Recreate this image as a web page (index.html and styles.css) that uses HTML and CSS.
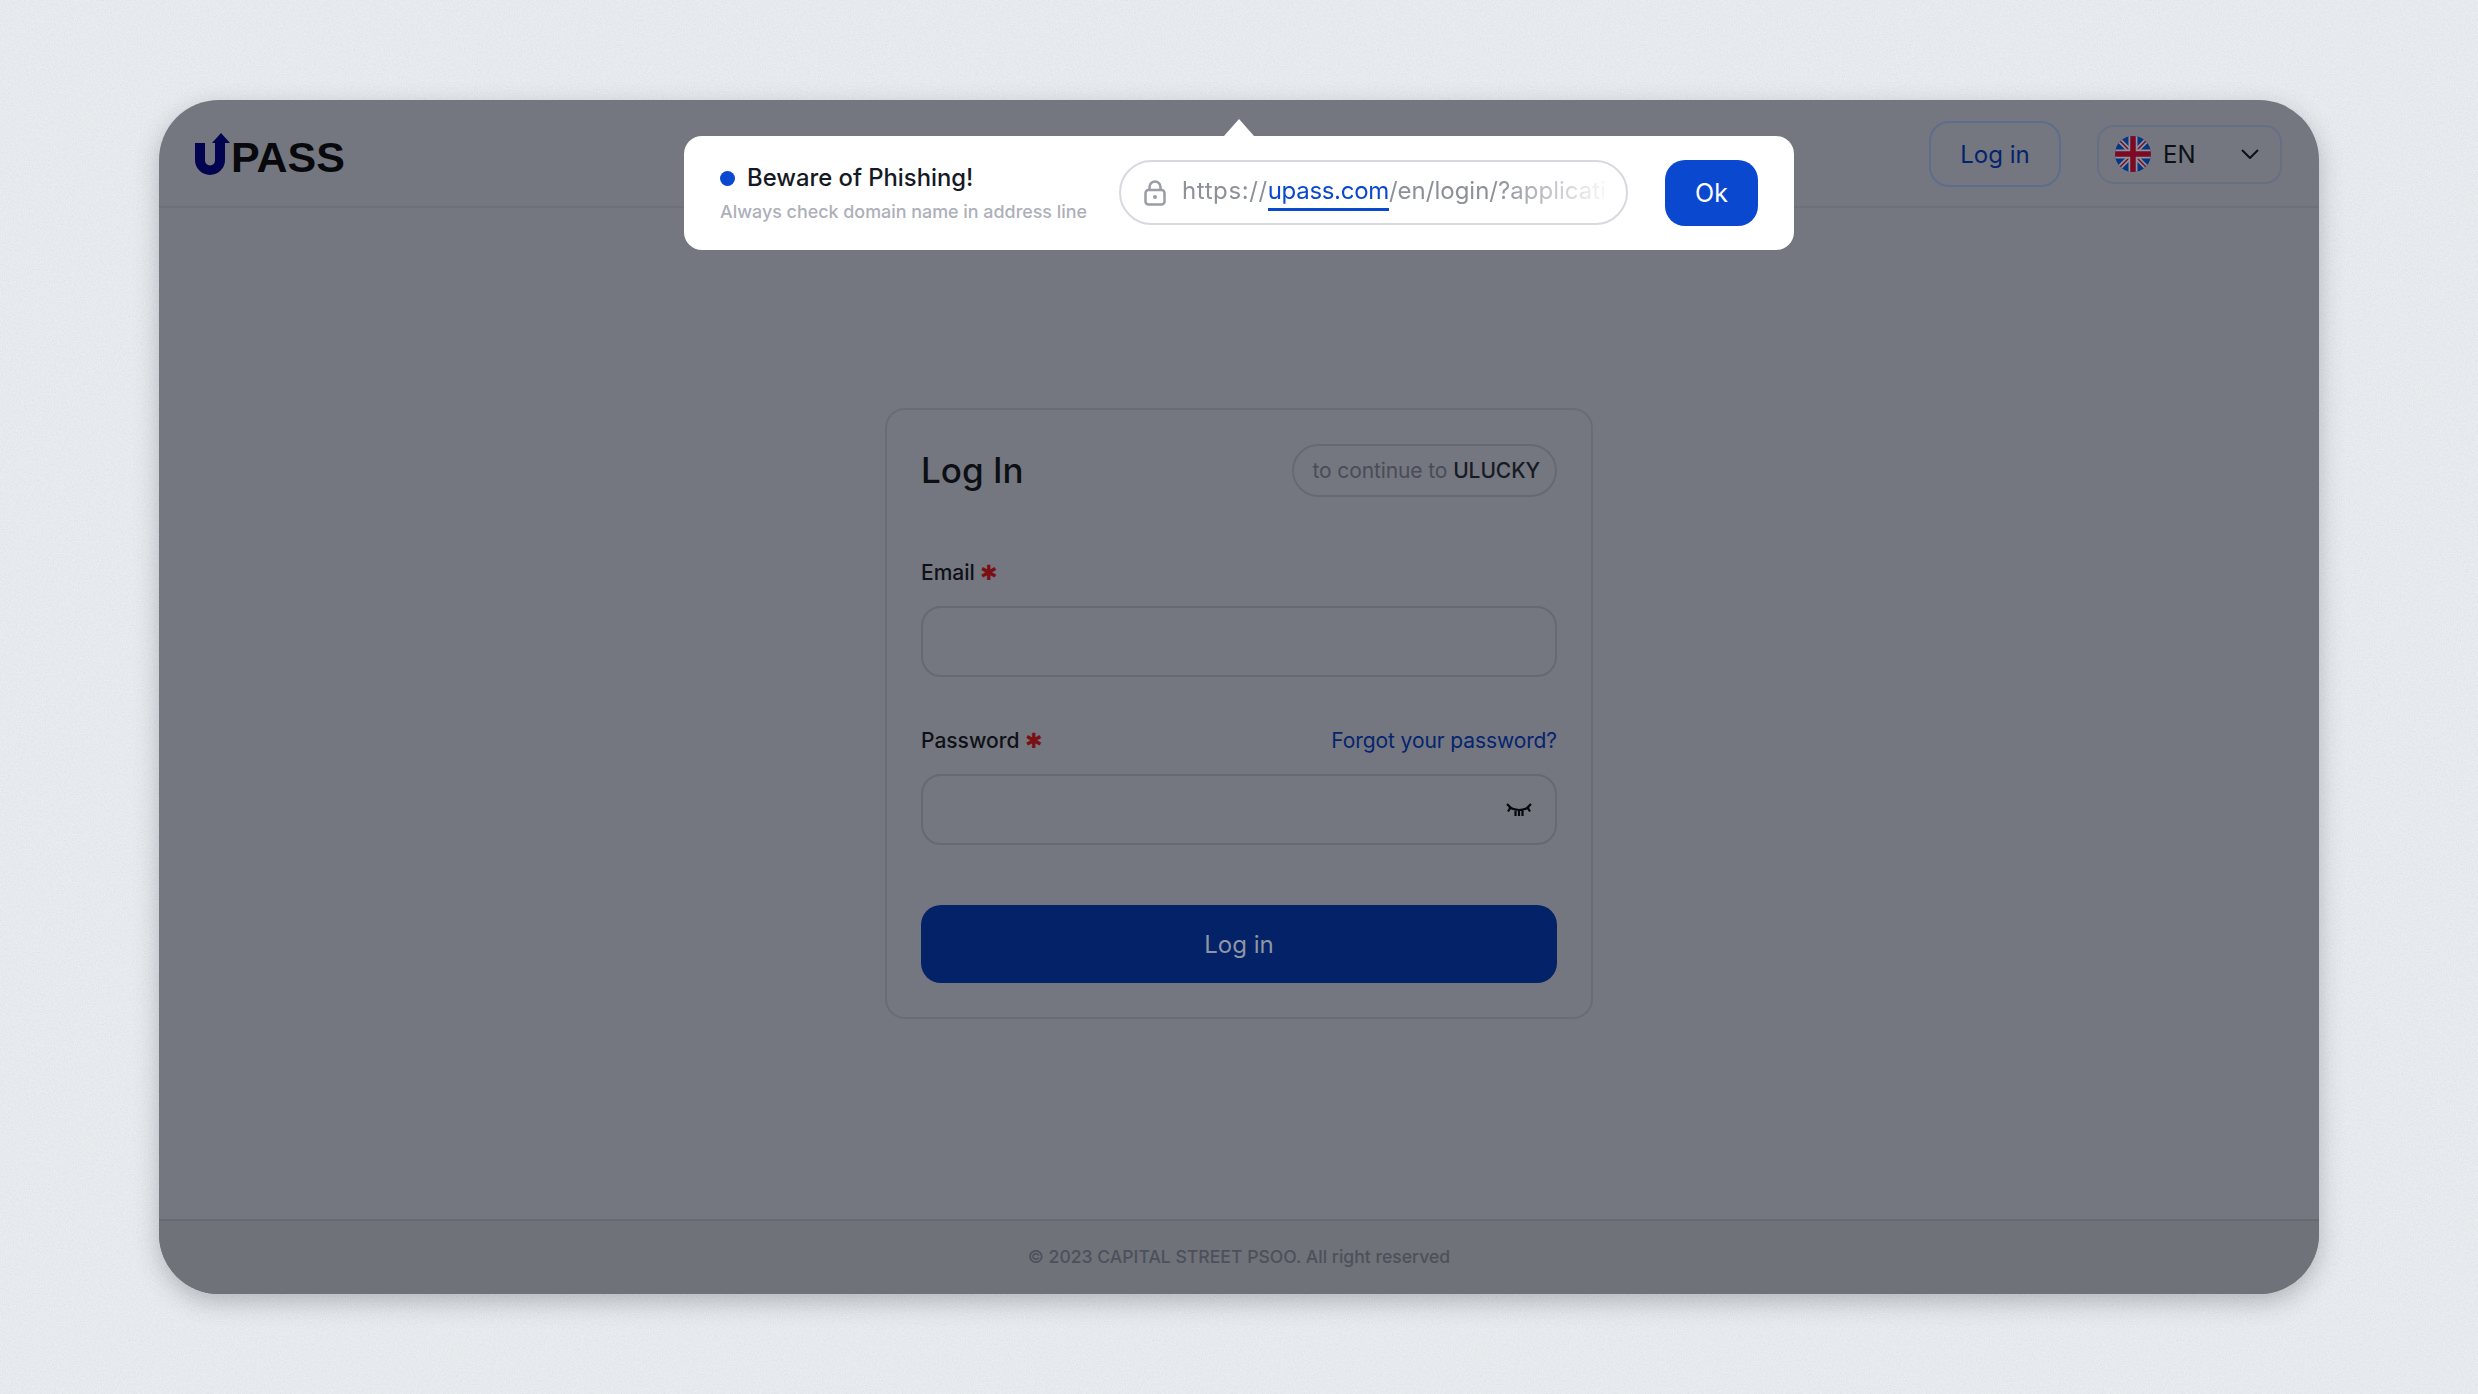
FILE: index.html
```html
<!DOCTYPE html>
<html lang="en">
<head>
<meta charset="utf-8">
<title>UPASS Log In</title>
<link rel="stylesheet" href="styles.css">
</head>
<body>
<svg class="grain" width="2478" height="1394" aria-hidden="true"><filter id="n"><feTurbulence type="fractalNoise" baseFrequency="0.75" numOctaves="2" seed="4"/><feColorMatrix values="0 0 0 0 0.45  0 0 0 0 0.5  0 0 0 0 0.55  0.4 0 0 0 -0.12"/></filter><rect width="2478" height="1394" filter="url(#n)"/></svg>
<div class="window">
  <header class="topbar">
    <div class="logo">
      <svg class="logo-u" width="37" height="42" viewBox="0 0 37 42"><path fill="#02044f" d="M0 10H10V27.500a5 5 0 0 0 10 0V10H17L26 0l9 10H30V27a15 15 0 0 1-30 0z"/></svg>
      <span class="logo-text">PASS</span>
    </div>
    <div class="topbar-actions">
      <a class="login-link">Log in</a>
      <div class="lang">
        <svg class="flag" width="36" height="36" viewBox="0 0 36 36"><defs><clipPath id="c"><circle cx="18" cy="18" r="18"/></clipPath></defs><g clip-path="url(#c)"><rect width="36" height="36" fill="#05367f"/><path d="M0 0L36 36M36 0L0 36" stroke="#8e919a" stroke-width="5"/><path d="M0 0L36 36M36 0L0 36" stroke="#7c0a24" stroke-width="1.500"/><path d="M18 0V36M0 18H36" stroke="#8e919a" stroke-width="9"/><path d="M18 0V36M0 18H36" stroke="#7c0a24" stroke-width="5.500"/></g></svg>
        <span class="lang-code">EN</span>
        <svg class="chevron" width="18" height="10" viewBox="0 0 18 10"><path d="M1 1l8 8 8-8" fill="none" stroke="#0d1016" stroke-width="2"/></svg>
      </div>
    </div>
  </header>

  <div class="popup">
    <span class="popup-arrow"></span>
    <div class="popup-copy">
      <div class="popup-title"><span class="dot"></span>Beware of Phishing!</div>
      <div class="popup-sub">Always check domain name in address line</div>
    </div>
    <div class="url-pill">
      <svg class="lock" width="22" height="26" viewBox="0 0 22 26"><rect x="1.500" y="10" width="19" height="14.500" rx="3" fill="none" stroke="#9a9da6" stroke-width="2.500"/><path d="M5.500 10V7a5.500 5.500 0 0 1 11 0v3" fill="none" stroke="#9a9da6" stroke-width="2.500"/><circle cx="11" cy="17" r="2" fill="#9a9da6"/></svg>
      <div class="url-text"><span class="url-scheme">https://</span><span class="url-domain">upass.com</span>/en/login/?applicati</div>
    </div>
    <button class="ok-btn">Ok</button>
  </div>

  <main class="content">
    <section class="card">
      <div class="card-head">
        <h1 class="card-title">Log In</h1>
        <div class="continue">to continue to <b>ULUCKY</b></div>
      </div>
      <div class="field email-field">
        <div class="label-row"><label class="label">Email <span class="req">✱</span></label></div>
        <div class="input"></div>
      </div>
      <div class="field password-field">
        <div class="label-row">
          <label class="label">Password <span class="req">✱</span></label>
          <a class="forgot">Forgot your password?</a>
        </div>
        <div class="input input-eye">
          <svg width="26" height="14" viewBox="0 0 26 14"><path d="M3 4c6 4 14 4 20 0M1 1l3.500 3.500L2 8.500M25 1l-3.500 3.500L24 8.500M9.500 6.500V13M13 7v6M16.500 6.500V13" fill="none" stroke="#06080c" stroke-width="2.200"/></svg>
        </div>
      </div>
      <button class="submit">Log in</button>
    </section>
  </main>

  <footer class="footer">© 2023 CAPITAL STREET PSOO. All right reserved</footer>
</div>
</body>
</html>
```

FILE: styles.css
```css
* { box-sizing: border-box; }
html, body { margin: 0; height: 100%; }
body {
  position: relative;
  width: 2478px;
  height: 1394px;
  padding: 100px 159px;
  overflow: hidden;
  font-family: Inter, "Liberation Sans", sans-serif;
  background: #ebeef1;
}
.grain { position: absolute; left: 0; top: 0; }
.window {
  position: relative;
  height: 1194px;
  display: flex;
  flex-direction: column;
  border-radius: 60px;
  background: #74777f;
  box-shadow: 0 8px 24px rgba(50, 60, 70, 0.3);
}
.topbar {
  height: 108px;
  flex: none;
  display: flex;
  align-items: flex-start;
  justify-content: space-between;
  padding: 21px 37px 0 36px;
  border-bottom: 2px solid #6d7079;
}
.logo { display: flex; align-items: flex-end; margin-top: 12px; height: 42px; }
.logo-u { flex: none; }
.logo-text {
  font-family: "Liberation Sans", Arial, sans-serif;
  font-weight: 700;
  font-size: 43px;
  line-height: 42px;
  color: #07090d;
  margin-left: -1px;
  transform: translateY(3px);
}
.topbar-actions { display: flex; align-items: center; gap: 36px; }
.login-link {
  width: 132px;
  height: 66px;
  display: flex;
  align-items: center;
  justify-content: center;
  border: 2px solid #5f6d8c;
  border-radius: 20px;
  color: #04236d;
  font-size: 24px;
}
.lang {
  width: 185px;
  height: 59px;
  display: flex;
  align-items: center;
  padding: 0 21px 0 16px;
  border: 2px solid #667085;
  border-radius: 17px;
}
.flag { flex: none; }
.lang-code { margin-left: 12px; font-size: 24px; color: #0d1016; flex: 1; }
.popup {
  position: absolute;
  left: 525px;
  top: 36px;
  width: 1110px;
  height: 114px;
  display: flex;
  align-items: center;
  padding: 0 36px;
  background: #fff;
  border-radius: 18px;
  z-index: 2;
}
.popup-arrow {
  position: absolute;
  left: 540px;
  top: -17px;
  width: 30px;
  height: 17px;
  background: #fff;
  clip-path: polygon(50% 0, 100% 100%, 0 100%);
}
.popup-copy { width: 399px; flex: none; }
.popup-title {
  display: flex;
  align-items: center;
  font-size: 23.8px;
  font-weight: 500;
  line-height: 28px;
  color: #151924;
  transform: translateY(1px);
}
.dot {
  width: 15px;
  height: 15px;
  margin-right: 12px;
  border-radius: 50%;
  background: #0b48d0;
}
.popup-sub {
  margin-top: 10px;
  font-size: 17.9px;
  font-weight: 500;
  line-height: 22px;
  color: #adb0b9;
}
.url-pill {
  width: 509px;
  height: 65px;
  flex: none;
  display: flex;
  align-items: center;
  margin-top: -1px;
  padding: 0 14px 0 23px;
  border: 2px solid #d7d9de;
  border-radius: 33px;
}
.lock { flex: none; }
.url-text {
  flex: 1;
  min-width: 0;
  margin-left: 16px;
  margin-top: -3px;
  white-space: nowrap;
  font-size: 24px;
  line-height: 38px;
  color: #8d9099;
  -webkit-mask-image: linear-gradient(to right, #000 73%, transparent 100%);
  mask-image: linear-gradient(to right, #000 73%, transparent 100%);
}
.url-scheme { letter-spacing: 0.6px; }
.url-domain {
  display: inline-block;
  color: #0b48d0;
  letter-spacing: -0.3px;
  border-bottom: 3px solid #0b48d0;
  line-height: 38px;
  height: 39px;
}
.ok-btn {
  width: 93px;
  height: 66px;
  flex: none;
  margin-left: 37px;
  border: 0;
  border-radius: 20px;
  background: #0b48d0;
  color: #fff;
  font-family: inherit;
  font-size: 25px;
}
.content {
  flex: 1;
  display: flex;
  justify-content: center;
  align-items: flex-start;
  padding-top: 200px;
}
.card {
  width: 708px;
  height: 611px;
  padding: 34px;
  border: 2px solid #696c75;
  border-radius: 20px;
  display: flex;
  flex-direction: column;
}
.card-head { display: flex; align-items: center; justify-content: space-between; height: 53px; }
.card-title { margin: 0; font-size: 35px; font-weight: 500; color: #0c0f14; line-height: 53px; }
.continue {
  height: 53px;
  padding: 0 15px 0 18px;
  display: flex;
  align-items: center;
  white-space: pre;
  border: 2px solid #666974;
  border-radius: 27px;
  font-size: 21px;
  letter-spacing: -0.1px;
  color: #494c57;
}
.continue b { font-weight: 500; color: #181b25; }
.field { display: flex; flex-direction: column; }
.email-field { margin-top: 61px; }
.password-field { margin-top: 49px; }
.label-row { display: flex; justify-content: space-between; align-items: center; height: 28px; margin-bottom: 20px; }
.label { font-size: 21px; font-weight: 500; color: #0e1117; }
.req { color: #7a0f14; font-size: 21px; }
.forgot { font-size: 21px; letter-spacing: -0.1px; color: #05246f; }
.input {
  height: 71px;
  border: 2px solid #666974;
  border-radius: 20px;
}
.input-eye { display: flex; align-items: center; justify-content: flex-end; padding-right: 23px; }
.submit {
  height: 79px;
  margin-top: 60px;
  border: 0;
  border-radius: 20px;
  background: #032268;
  color: #8f95a5;
  font-family: inherit;
  font-size: 24px;
}
.footer {
  height: 75px;
  flex: none;
  display: flex;
  align-items: center;
  justify-content: center;
  padding-bottom: 2px;
  border-top: 2px solid #676a73;
  border-radius: 0 0 60px 60px;
  background: #6f7279;
  color: #4d505b;
  font-size: 17.6px;
  font-weight: 500;
}
```
